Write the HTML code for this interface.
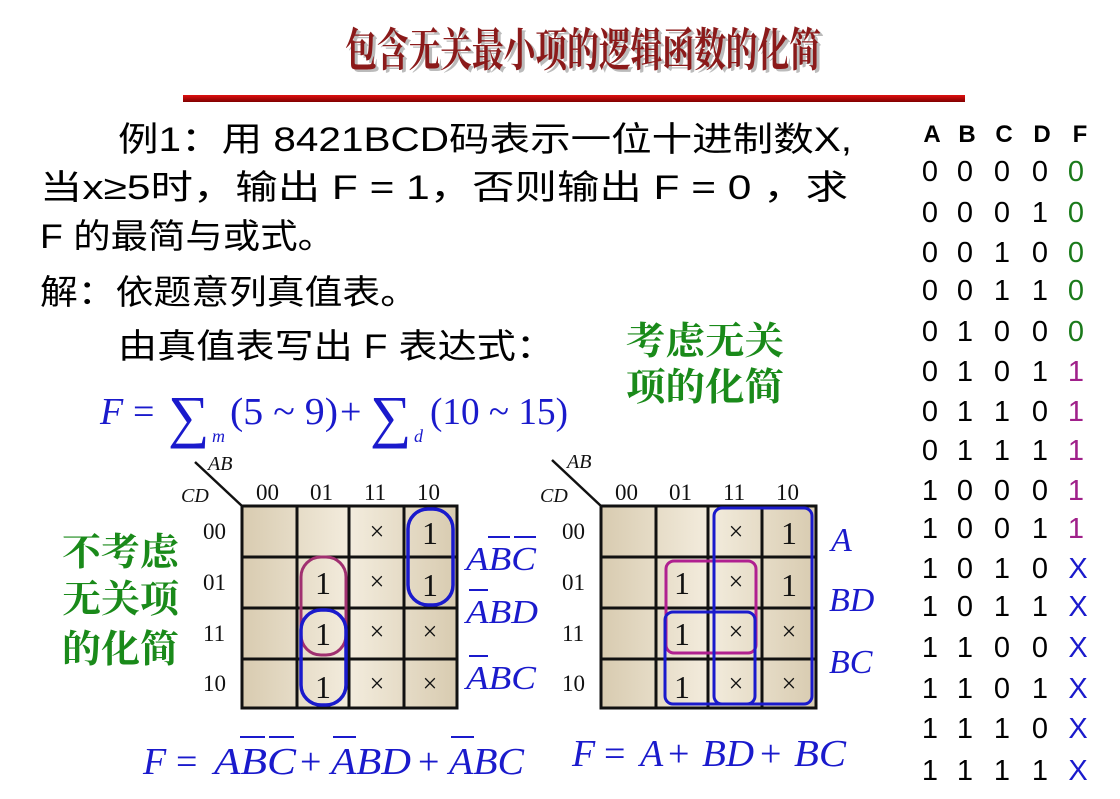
<!DOCTYPE html>
<html><head><meta charset="utf-8"><style>
html,body{margin:0;padding:0;background:#fff;width:1120px;height:799px;overflow:hidden}
svg{display:block}
.cn{font-family:"Liberation Sans","Noto Sans CJK SC",sans-serif}
.tm{font-family:"Liberation Serif","Noto Serif CJK SC",serif}
</style></head><body>
<svg width="1120" height="799" viewBox="0 0 1120 799" xmlns="http://www.w3.org/2000/svg">
<defs>
<linearGradient id="cell" x1="0" y1="0" x2="1" y2="0">
<stop offset="0" stop-color="#d8cbb0"/><stop offset="0.5" stop-color="#f3ecdd"/><stop offset="1" stop-color="#d8cbb0"/>
</linearGradient>
<linearGradient id="bar" x1="0" y1="0" x2="0" y2="1">
<stop offset="0" stop-color="#e01010"/><stop offset="1" stop-color="#800000"/>
</linearGradient>
</defs>
<!-- title -->
<g transform="translate(0,66) scale(1,1.35)">
<text x="348" y="2" font-size="34" font-weight="bold" fill="#bbb" font-family="Noto Serif CJK SC,serif" textLength="476" lengthAdjust="spacingAndGlyphs">包含无关最小项的逻辑函数的化简</text>
<text x="345" y="0" font-size="34" font-weight="bold" fill="#8b1a1a" font-family="Noto Serif CJK SC,serif" textLength="476" lengthAdjust="spacingAndGlyphs">包含无关最小项的逻辑函数的化简</text>
</g>
<rect x="183" y="95" width="782" height="7" fill="url(#bar)"/>

<!-- left text -->
<g class="cn" font-size="34" fill="#000" lengthAdjust="spacingAndGlyphs">
<text x="118" y="151" textLength="734" lengthAdjust="spacingAndGlyphs">例1：用 8421BCD码表示一位十进制数X,</text>
<text x="40" y="199" textLength="808" lengthAdjust="spacingAndGlyphs">当x≥5时，输出 F = 1，否则输出 F = 0 ，求</text>
<text x="40" y="248" textLength="295" lengthAdjust="spacingAndGlyphs">F 的最简与或式。</text>
<text x="40" y="304" textLength="378" lengthAdjust="spacingAndGlyphs">解：依题意列真值表。</text>
<text x="118" y="358" textLength="437" lengthAdjust="spacingAndGlyphs">由真值表写出 F 表达式：</text>
</g>
<g font-family="Noto Serif CJK SC,serif" font-size="38" fill="#1a8a1a" font-weight="bold">
<text x="626" y="354" textLength="158" lengthAdjust="spacingAndGlyphs">考虑无关</text>
<text x="626" y="400" textLength="158" lengthAdjust="spacingAndGlyphs">项的化简</text>
<text x="62" y="565" textLength="117" lengthAdjust="spacingAndGlyphs">不考虑</text>
<text x="62" y="612" textLength="117" lengthAdjust="spacingAndGlyphs">无关项</text>
<text x="62" y="662" textLength="117" lengthAdjust="spacingAndGlyphs">的化简</text>
</g>
<!-- F formula -->
<g class="tm" fill="#1a1acc" font-size="38" font-style="italic">
<text x="100" y="424">F</text>
<text x="133" y="424" font-style="normal">=</text>
<text x="168" y="436" font-style="normal" font-size="58">∑</text>
<text x="212" y="442" font-size="18">m</text>
<text x="230" y="424" font-style="normal" textLength="108" lengthAdjust="spacingAndGlyphs">(5 ~ 9)</text>
<text x="340" y="424" font-style="normal">+</text>
<text x="370" y="436" font-style="normal" font-size="58">∑</text>
<text x="414" y="442" font-size="18">d</text>
<text x="430" y="424" font-style="normal" textLength="138" lengthAdjust="spacingAndGlyphs">(10 ~ 15)</text>
</g>

<!-- truth table -->
<g class="cn" font-size="24" font-weight="bold" text-anchor="middle">
<text x="932" y="142">A</text><text x="967" y="142">B</text><text x="1004" y="142">C</text><text x="1042" y="142">D</text><text x="1080" y="142">F</text>
</g>
<g class="cn" font-size="29" text-anchor="middle">
<g transform="translate(0,181)"><text x="930">0</text><text x="965">0</text><text x="1002">0</text><text x="1040">0</text><text x="1076" fill="#1a7a1a">0</text></g>
<g transform="translate(0,222)"><text x="930">0</text><text x="965">0</text><text x="1002">0</text><text x="1040">1</text><text x="1076" fill="#1a7a1a">0</text></g>
<g transform="translate(0,262)"><text x="930">0</text><text x="965">0</text><text x="1002">1</text><text x="1040">0</text><text x="1076" fill="#1a7a1a">0</text></g>
<g transform="translate(0,300)"><text x="930">0</text><text x="965">0</text><text x="1002">1</text><text x="1040">1</text><text x="1076" fill="#1a7a1a">0</text></g>
<g transform="translate(0,341)"><text x="930">0</text><text x="965">1</text><text x="1002">0</text><text x="1040">0</text><text x="1076" fill="#1a7a1a">0</text></g>
<g transform="translate(0,381)"><text x="930">0</text><text x="965">1</text><text x="1002">0</text><text x="1040">1</text><text x="1076" fill="#a0208a">1</text></g>
<g transform="translate(0,421)"><text x="930">0</text><text x="965">1</text><text x="1002">1</text><text x="1040">0</text><text x="1076" fill="#a0208a">1</text></g>
<g transform="translate(0,460)"><text x="930">0</text><text x="965">1</text><text x="1002">1</text><text x="1040">1</text><text x="1076" fill="#a0208a">1</text></g>
<g transform="translate(0,500)"><text x="930">1</text><text x="965">0</text><text x="1002">0</text><text x="1040">0</text><text x="1076" fill="#a0208a">1</text></g>
<g transform="translate(0,538)"><text x="930">1</text><text x="965">0</text><text x="1002">0</text><text x="1040">1</text><text x="1076" fill="#a0208a">1</text></g>
<g transform="translate(0,578)"><text x="930">1</text><text x="965">0</text><text x="1002">1</text><text x="1040">0</text><text x="1078" fill="#1a1acc">X</text></g>
<g transform="translate(0,616)"><text x="930">1</text><text x="965">0</text><text x="1002">1</text><text x="1040">1</text><text x="1078" fill="#1a1acc">X</text></g>
<g transform="translate(0,657)"><text x="930">1</text><text x="965">1</text><text x="1002">0</text><text x="1040">0</text><text x="1078" fill="#1a1acc">X</text></g>
<g transform="translate(0,698)"><text x="930">1</text><text x="965">1</text><text x="1002">0</text><text x="1040">1</text><text x="1078" fill="#1a1acc">X</text></g>
<g transform="translate(0,738)"><text x="930">1</text><text x="965">1</text><text x="1002">1</text><text x="1040">0</text><text x="1078" fill="#1a1acc">X</text></g>
<g transform="translate(0,780)"><text x="930">1</text><text x="965">1</text><text x="1002">1</text><text x="1040">1</text><text x="1078" fill="#1a1acc">X</text></g>
</g>

<!-- K-map 1 -->
<g>
<rect x="242" y="506" width="215" height="202" fill="url(#cell)"/>
<g stroke="#111" stroke-width="3" fill="none">
<rect x="242" y="506" width="215" height="202"/>
<line x1="297" y1="506" x2="297" y2="708"/><line x1="349" y1="506" x2="349" y2="708"/><line x1="404" y1="506" x2="404" y2="708"/>
<line x1="242" y1="557" x2="457" y2="557"/><line x1="242" y1="608" x2="457" y2="608"/><line x1="242" y1="659" x2="457" y2="659"/>
<line x1="195" y1="462" x2="242" y2="506" stroke-width="2.5"/>
</g>
<g class="tm" font-size="23" fill="#111">
<text x="208" y="470" font-style="italic" font-size="20">AB</text>
<text x="181" y="502" font-style="italic" font-size="20">CD</text>
<text x="256" y="500">00</text><text x="310" y="500">01</text><text x="364" y="500">11</text><text x="417" y="500">10</text>
<text x="203" y="539">00</text><text x="203" y="590">01</text><text x="203" y="641">11</text><text x="203" y="691">10</text>
</g>
<g class="tm" font-size="32" fill="#111" text-anchor="middle">
<text x="430" y="544">1</text><text x="430" y="596">1</text>
<text x="323" y="594">1</text><text x="323" y="645">1</text><text x="323" y="698">1</text>
<text x="377" y="540" font-size="26">×</text><text x="377" y="590" font-size="26">×</text><text x="377" y="640" font-size="26">×</text><text x="377" y="692" font-size="26">×</text>
<text x="430" y="640" font-size="26">×</text><text x="430" y="692" font-size="26">×</text>
</g>
<rect x="301" y="557" width="45" height="98" rx="20" fill="none" stroke="#a03070" stroke-width="3"/>
<rect x="301" y="610" width="45" height="95" rx="20" fill="none" stroke="#1a1acc" stroke-width="3.5"/>
<rect x="408" y="509" width="45" height="96" rx="20" fill="none" stroke="#1a1acc" stroke-width="3.5"/>
<g class="tm" font-size="34" font-style="italic" fill="#1a1acc">
<text x="466" y="570" textLength="70" lengthAdjust="spacingAndGlyphs">ABC</text>
<line x1="488" y1="537" x2="510" y2="537" stroke="#1a1acc" stroke-width="2"/><line x1="514" y1="537" x2="536" y2="537" stroke="#1a1acc" stroke-width="2"/>
<text x="466" y="623" textLength="72" lengthAdjust="spacingAndGlyphs">ABD</text>
<line x1="469" y1="590" x2="488" y2="590" stroke="#1a1acc" stroke-width="2"/>
<text x="466" y="689" textLength="70" lengthAdjust="spacingAndGlyphs">ABC</text>
<line x1="469" y1="656" x2="488" y2="656" stroke="#1a1acc" stroke-width="2"/>
</g>
</g>

<!-- K-map 2 -->
<g>
<rect x="601" y="506" width="215" height="202" fill="url(#cell)"/>
<g stroke="#111" stroke-width="3" fill="none">
<rect x="601" y="506" width="215" height="202"/>
<line x1="656" y1="506" x2="656" y2="708"/><line x1="708" y1="506" x2="708" y2="708"/><line x1="762" y1="506" x2="762" y2="708"/>
<line x1="601" y1="557" x2="816" y2="557"/><line x1="601" y1="608" x2="816" y2="608"/><line x1="601" y1="659" x2="816" y2="659"/>
<line x1="552" y1="460" x2="601" y2="506" stroke-width="2.5"/>
</g>
<g class="tm" font-size="23" fill="#111">
<text x="567" y="468" font-style="italic" font-size="20">AB</text>
<text x="540" y="502" font-style="italic" font-size="20">CD</text>
<text x="615" y="500">00</text><text x="669" y="500">01</text><text x="723" y="500">11</text><text x="776" y="500">10</text>
<text x="562" y="539">00</text><text x="562" y="590">01</text><text x="562" y="641">11</text><text x="562" y="691">10</text>
</g>
<g class="tm" font-size="32" fill="#111" text-anchor="middle">
<text x="789" y="544">1</text><text x="789" y="596">1</text>
<text x="682" y="594">1</text><text x="682" y="645">1</text><text x="682" y="698">1</text>
<text x="736" y="540" font-size="26">×</text><text x="736" y="590" font-size="26">×</text><text x="736" y="640" font-size="26">×</text><text x="736" y="692" font-size="26">×</text>
<text x="789" y="640" font-size="26">×</text><text x="789" y="692" font-size="26">×</text>
</g>
<rect x="666" y="561" width="90" height="92" rx="8" fill="none" stroke="#b02090" stroke-width="3"/>
<rect x="665" y="612" width="90" height="92" rx="8" fill="none" stroke="#1a1acc" stroke-width="3"/>
<rect x="714" y="508" width="98" height="196" rx="8" fill="none" stroke="#1a1acc" stroke-width="3"/>
<g class="tm" font-size="34" font-style="italic" fill="#1a1acc">
<text x="831" y="551">A</text>
<text x="829" y="611">BD</text>
<text x="829" y="673">BC</text>
</g>
</g>

<!-- bottom formulas -->
<g class="tm" font-size="38" font-style="italic" fill="#1a1acc">
<text x="143" y="774">F</text><text x="176" y="774" font-style="normal">=</text>
<text x="214" y="774" textLength="82" lengthAdjust="spacingAndGlyphs">ABC</text>
<line x1="240" y1="737" x2="265" y2="737" stroke="#1a1acc" stroke-width="2"/><line x1="269" y1="737" x2="294" y2="737" stroke="#1a1acc" stroke-width="2"/>
<text x="300" y="774" font-style="normal">+</text>
<text x="331" y="774" textLength="80" lengthAdjust="spacingAndGlyphs">ABD</text>
<line x1="333" y1="737" x2="356" y2="737" stroke="#1a1acc" stroke-width="2"/>
<text x="418" y="774" font-style="normal">+</text>
<text x="449" y="774" textLength="75" lengthAdjust="spacingAndGlyphs">ABC</text>
<line x1="451" y1="737" x2="474" y2="737" stroke="#1a1acc" stroke-width="2"/>
<text x="572" y="766">F</text><text x="604" y="766" font-style="normal">=</text>
<text x="640" y="766">A</text><text x="668" y="766" font-style="normal">+</text>
<text x="702" y="766" textLength="52" lengthAdjust="spacingAndGlyphs">BD</text><text x="760" y="766" font-style="normal">+</text>
<text x="794" y="766" textLength="52" lengthAdjust="spacingAndGlyphs">BC</text>
</g>
</svg>
</body></html>
